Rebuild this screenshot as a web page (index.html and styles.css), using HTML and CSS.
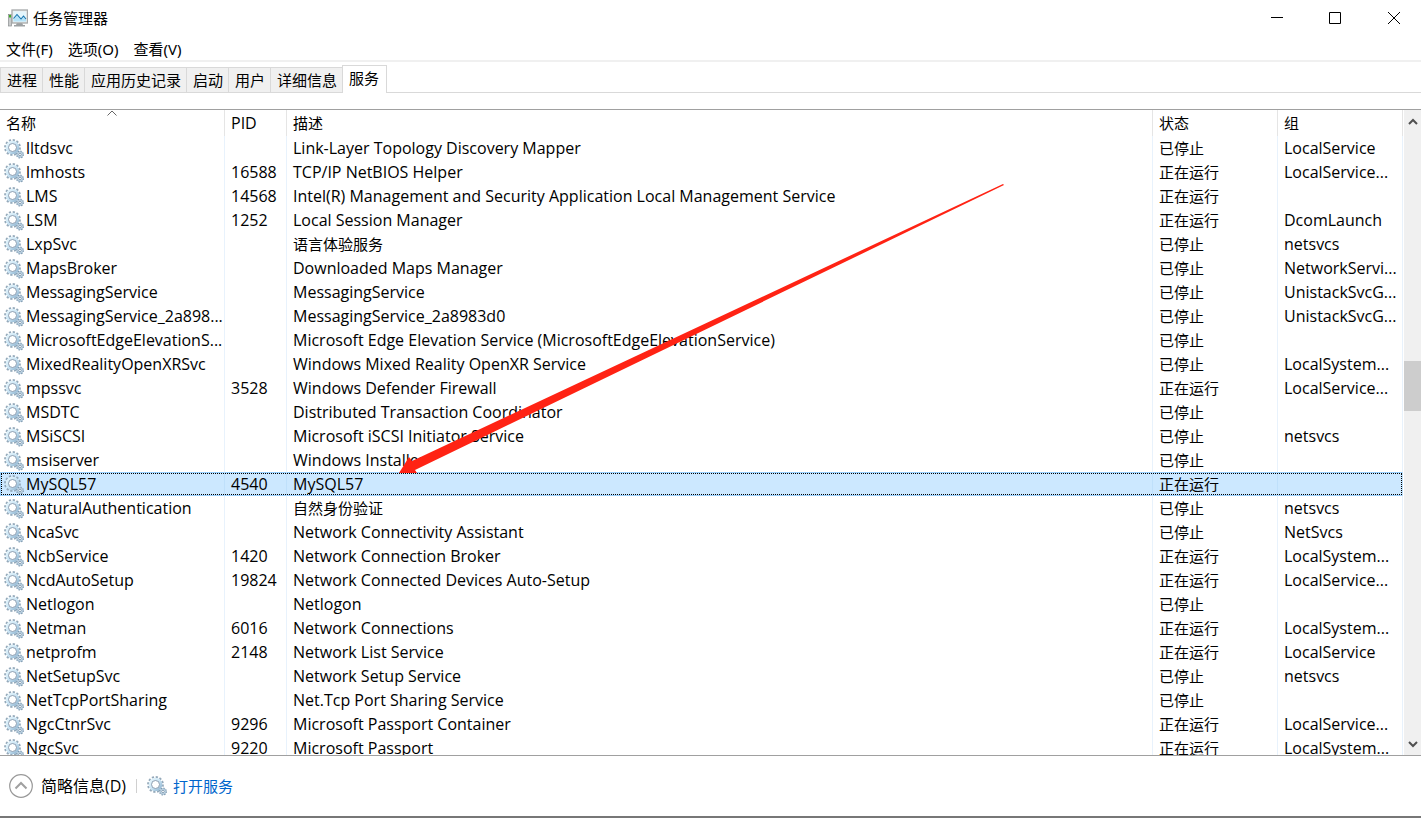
FILE: index.html
```html
<!DOCTYPE html>
<html lang="zh-CN">
<head>
<meta charset="utf-8">
<title>任务管理器</title>
<link rel="stylesheet" href="styles.css">
</head>
<body>
<svg class="defs" aria-hidden="true">
  <defs>
    <linearGradient id="steel" x1="0" y1="0" x2="1" y2="1"><stop offset="0" stop-color="#e6f5fc"/><stop offset="0.5" stop-color="#c9e4f4"/><stop offset="1" stop-color="#8fb4d0"/></linearGradient>
    <symbol id="gears" viewBox="0 0 20 20">
      <circle cx="8.500" cy="8.500" r="7.400" fill="none" stroke="#94a9ba" stroke-width="2" stroke-dasharray="2.200 1.674"/>
      <circle cx="8.500" cy="8.500" r="5.400" fill="none" stroke="url(#steel)" stroke-width="2.800"/>
      <circle cx="8.500" cy="8.500" r="4" fill="#fff" stroke="#7d92a8" stroke-width="0.900"/>
      <circle cx="16" cy="15.500" r="3.400" fill="#d3e3ee" stroke="#7895ac" stroke-width="1.200" stroke-dasharray="1.300 1.370"/>
      <circle cx="16" cy="15.500" r="2.800" fill="#cfe2ee" stroke="#8ba8bf" stroke-width="0.600"/>
      <circle cx="16" cy="15.500" r="1.300" fill="#fff" stroke="#607e99" stroke-width="0.700"/>
    </symbol>
  </defs>
</svg>
<div class="window">
  <header class="titlebar">
    <svg class="app-icon" viewBox="0 0 20 18" aria-hidden="true">
      <rect x="0.500" y="5.500" width="3" height="11.500" fill="#c9cbcc" stroke="#8b8f91" stroke-width="0.700"/>
      <rect x="1" y="6" width="2" height="2.500" fill="#3fae2a"/>
      <path d="M9 13.500h5l1 2.500h2v1.500H6V16h2z" fill="#9da1a3"/>
      <rect x="4" y="1" width="15.500" height="13" fill="#eceeee" stroke="#a6a9aa" stroke-width="1.300"/>
      <rect x="5.500" y="2.500" width="12.500" height="10" fill="#e4f6fd"/>
      <path d="M5.500 9.500l3.500-4 4 4 2.500-2.500 2.500 3v2.500H5.500z" fill="#b5e3f8"/>
      <path d="M5.500 9.500l3.500-4 4 4.500 2.500-3 2.500 3" fill="none" stroke="#1874ad" stroke-width="1.100"/>
    </svg>
    <h1 class="title">任务管理器</h1>
    <div class="window-buttons">
      <button type="button" aria-label="最小化"><svg viewBox="0 0 12 12"><path d="M0 5.500h12"/></svg></button>
      <button type="button" aria-label="最大化"><svg viewBox="0 0 12 12"><path d="M.5.5h11v11H.5z"/></svg></button>
      <button type="button" aria-label="关闭"><svg viewBox="0 0 12 12"><path d="M0 0l12 12M12 0L0 12"/></svg></button>
    </div>
  </header>
  <nav class="menu">
    <button type="button">文件(F)</button>
    <button type="button">选项(O)</button>
    <button type="button">查看(V)</button>
  </nav>
  <div class="tabs" role="tablist">
    <button type="button" role="tab">进程</button>
    <button type="button" role="tab">性能</button>
    <button type="button" role="tab">应用历史记录</button>
    <button type="button" role="tab">启动</button>
    <button type="button" role="tab">用户</button>
    <button type="button" role="tab">详细信息</button>
    <button type="button" role="tab" class="active" aria-selected="true">服务</button>
  </div>
  <main class="list">
    <div class="list-view">
      <table class="services">
        <colgroup><col class="col-name"><col class="col-pid"><col><col class="col-state"><col class="col-group"></colgroup>
        <thead>
          <tr><th>名称<svg class="sort" viewBox="0 0 10 6" aria-hidden="true"><path d="M.5 5.500L5 1l4.500 4.500"/></svg></th><th class="latin">PID</th><th>描述</th><th>状态</th><th>组</th></tr>
        </thead>
        <tbody>
          <tr><td><svg class="gear"><use href="#gears"/></svg>lltdsvc</td><td></td><td>Link-Layer Topology Discovery Mapper</td><td>已停止</td><td>LocalService</td></tr>
          <tr><td><svg class="gear"><use href="#gears"/></svg>lmhosts</td><td>16588</td><td>TCP/IP NetBIOS Helper</td><td>正在运行</td><td>LocalService...</td></tr>
          <tr><td><svg class="gear"><use href="#gears"/></svg>LMS</td><td>14568</td><td>Intel(R) Management and Security Application Local Management Service</td><td>正在运行</td><td></td></tr>
          <tr><td><svg class="gear"><use href="#gears"/></svg>LSM</td><td>1252</td><td>Local Session Manager</td><td>正在运行</td><td>DcomLaunch</td></tr>
          <tr><td><svg class="gear"><use href="#gears"/></svg>LxpSvc</td><td></td><td class="han">语言体验服务</td><td>已停止</td><td>netsvcs</td></tr>
          <tr><td><svg class="gear"><use href="#gears"/></svg>MapsBroker</td><td></td><td>Downloaded Maps Manager</td><td>已停止</td><td>NetworkServi...</td></tr>
          <tr><td><svg class="gear"><use href="#gears"/></svg>MessagingService</td><td></td><td>MessagingService</td><td>已停止</td><td>UnistackSvcG...</td></tr>
          <tr><td><svg class="gear"><use href="#gears"/></svg>MessagingService_2a898...</td><td></td><td>MessagingService_2a8983d0</td><td>已停止</td><td>UnistackSvcG...</td></tr>
          <tr><td><svg class="gear"><use href="#gears"/></svg>MicrosoftEdgeElevationS...</td><td></td><td>Microsoft Edge Elevation Service (MicrosoftEdgeElevationService)</td><td>已停止</td><td></td></tr>
          <tr><td><svg class="gear"><use href="#gears"/></svg>MixedRealityOpenXRSvc</td><td></td><td>Windows Mixed Reality OpenXR Service</td><td>已停止</td><td>LocalSystem...</td></tr>
          <tr><td><svg class="gear"><use href="#gears"/></svg>mpssvc</td><td>3528</td><td>Windows Defender Firewall</td><td>正在运行</td><td>LocalService...</td></tr>
          <tr><td><svg class="gear"><use href="#gears"/></svg>MSDTC</td><td></td><td>Distributed Transaction Coordinator</td><td>已停止</td><td></td></tr>
          <tr><td><svg class="gear"><use href="#gears"/></svg>MSiSCSI</td><td></td><td>Microsoft iSCSI Initiator Service</td><td>已停止</td><td>netsvcs</td></tr>
          <tr><td><svg class="gear"><use href="#gears"/></svg>msiserver</td><td></td><td>Windows Installer</td><td>已停止</td><td></td></tr>
          <tr class="selected"><td><svg class="gear"><use href="#gears"/></svg>MySQL57</td><td>4540</td><td>MySQL57</td><td>正在运行</td><td></td></tr>
          <tr><td><svg class="gear"><use href="#gears"/></svg>NaturalAuthentication</td><td></td><td class="han">自然身份验证</td><td>已停止</td><td>netsvcs</td></tr>
          <tr><td><svg class="gear"><use href="#gears"/></svg>NcaSvc</td><td></td><td>Network Connectivity Assistant</td><td>已停止</td><td>NetSvcs</td></tr>
          <tr><td><svg class="gear"><use href="#gears"/></svg>NcbService</td><td>1420</td><td>Network Connection Broker</td><td>正在运行</td><td>LocalSystem...</td></tr>
          <tr><td><svg class="gear"><use href="#gears"/></svg>NcdAutoSetup</td><td>19824</td><td>Network Connected Devices Auto-Setup</td><td>正在运行</td><td>LocalService...</td></tr>
          <tr><td><svg class="gear"><use href="#gears"/></svg>Netlogon</td><td></td><td>Netlogon</td><td>已停止</td><td></td></tr>
          <tr><td><svg class="gear"><use href="#gears"/></svg>Netman</td><td>6016</td><td>Network Connections</td><td>正在运行</td><td>LocalSystem...</td></tr>
          <tr><td><svg class="gear"><use href="#gears"/></svg>netprofm</td><td>2148</td><td>Network List Service</td><td>正在运行</td><td>LocalService</td></tr>
          <tr><td><svg class="gear"><use href="#gears"/></svg>NetSetupSvc</td><td></td><td>Network Setup Service</td><td>已停止</td><td>netsvcs</td></tr>
          <tr><td><svg class="gear"><use href="#gears"/></svg>NetTcpPortSharing</td><td></td><td>Net.Tcp Port Sharing Service</td><td>已停止</td><td></td></tr>
          <tr><td><svg class="gear"><use href="#gears"/></svg>NgcCtnrSvc</td><td>9296</td><td>Microsoft Passport Container</td><td>正在运行</td><td>LocalService...</td></tr>
          <tr><td><svg class="gear"><use href="#gears"/></svg>NgcSvc</td><td>9220</td><td>Microsoft Passport</td><td>正在运行</td><td>LocalSystem...</td></tr>
        </tbody>
      </table>
    </div>
    <div class="scrollbar">
      <button type="button" aria-label="向上滚动"><svg viewBox="0 0 10 7"><path d="M1 6l4-4 4 4"/></svg></button>
      <div class="track-above"></div>
      <div class="thumb"></div>
      <div class="track-below"></div>
      <button type="button" aria-label="向下滚动"><svg viewBox="0 0 10 7"><path d="M1 1l4 4 4-4"/></svg></button>
    </div>
  </main>
  <footer class="footer">
    <button type="button" class="fewer">
      <svg viewBox="0 0 24 24" aria-hidden="true"><circle cx="12" cy="12" r="11.300" fill="none" stroke="#999" stroke-width="1.200"/><path d="M6.500 14.500L12 9l5.500 5.500" fill="none" stroke="#a0a0a0" stroke-width="2"/></svg>简略信息(D)
    </button>
    <a class="open" href="#"><svg class="gear"><use href="#gears"/></svg>打开服务</a>
  </footer>
  <svg class="arrow" viewBox="0 0 606 290" aria-hidden="true"><path d="M1 289L11 273l3 4L605 0l1 1L17 286l2 3z" fill="#ff2314"/></svg>
</div>
</body>
</html>
```
FILE: styles.css
```css
* { box-sizing: border-box; }

body {
  margin: 0;
  background: #fff;
  color: #000;
  font: 15px/24px "Noto Sans", "Noto Sans CJK SC", sans-serif;
}

button {
  margin: 0;
  padding: 0;
  border: 0;
  background: none;
  color: inherit;
  font: inherit;
}

.defs { position: absolute; width: 0; height: 0; }

.window {
  position: relative;
  display: flex;
  flex-direction: column;
  height: 100vh;
  overflow: hidden;
}

.titlebar {
  display: flex;
  flex: none;
  align-items: center;
  height: 36px;
  padding-left: 8px;
}
.app-icon { width: 20px; height: 18px; margin-right: 5px; }
.title { margin: 0; font-size: 15px; font-weight: 400; }
.window-buttons { display: flex; margin-left: auto; }
.window-buttons button {
  display: grid;
  place-items: center;
  width: 58px;
  height: 36px;
}
.window-buttons button:last-child { width: 57px; padding-left: 3px; }
.window-buttons svg { width: 12px; height: 12px; }
.window-buttons path { fill: none; stroke: #000; }

.menu {
  display: flex;
  flex: none;
  gap: 15px;
  height: 26px;
  padding: 1px 0 0 6px;
  border-bottom: 2px solid #f0f0f0;
}
.menu button { height: 24px; }

.tabs {
  display: flex;
  flex: none;
  align-items: flex-end;
  height: 31px;
  border-bottom: 1px solid #d9d9d9;
}
.tabs button {
  height: 25px;
  padding: 0 5px 0 6px;
  border: solid #d9d9d9;
  border-width: 1px 0 0 1px;
  background: #f0f0f0;
}
.tabs .active {
  height: 28px;
  margin-bottom: -1px;
  padding: 0 7px 4px 6px;
  border-right-width: 1px;
  background: #fff;
}

.list {
  display: flex;
  flex: 1;
  min-height: 0;
  margin-top: 16px;
  border: solid #a0a0a0;
  border-width: 1px 0;
}
.list-view {
  flex: 1;
  min-width: 0;
  padding-right: 1px;
  overflow: hidden;
}

.services {
  width: 100%;
  border-spacing: 0;
  table-layout: fixed;
}
.col-name { width: 225px; }
.col-pid { width: 62px; }
.col-state, .col-group { width: 125px; }
.services th {
  position: relative;
  height: 26px;
  padding: 0 0 0 6px;
  border-right: 1px solid #e5e5e5;
  font-weight: 400;
  text-align: left;
}
.services td {
  height: 24px;
  padding: 0 0 0 6px;
  border-right: 1px solid #e8f2fc;
  overflow: hidden;
  line-height: 22px;
  white-space: nowrap;
}
.services td, .services .latin {
  font-family: "Open Sans", "Noto Sans CJK SC", sans-serif;
  font-size: 16px;
}
.services td:first-child { padding-left: 4px; }
.services td:nth-child(4), .services .han {
  font-family: "Noto Sans CJK SC", sans-serif;
  font-size: 15px;
}
.gear {
  width: 20px;
  height: 20px;
  margin-right: 2px;
}
.services .gear { margin-top: -4px; margin-bottom: -2px; vertical-align: middle; }
.services .selected {
  background: #cce8ff;
  box-shadow: inset 0 0 0 1px #99d1ff;
  outline: 1px dotted #000;
  outline-offset: -2px;
}
.selected td { border-right-color: #bfe0fb; }
.sort {
  position: absolute;
  top: 0;
  left: calc(50% - 5px);
  width: 10px;
  height: 6px;
  fill: none;
  stroke: #666;
}

.scrollbar {
  display: flex;
  flex-direction: column;
  width: 17px;
  background: #f0f0f0;
}
.scrollbar button {
  display: grid;
  flex: none;
  place-items: center;
  height: 22px;
}
.scrollbar svg { width: 10px; height: 7px; fill: none; stroke: #505050; stroke-width: 2; }
.track-above { flex: 229; }
.thumb { flex: 50; background: #cdcdcd; }
.track-below { flex: 322; }

.footer {
  display: flex;
  flex: none;
  align-items: center;
  height: 62px;
  padding-left: 9px;
  border-bottom: 2px solid #777;
}
.fewer {
  display: flex;
  align-items: center;
  gap: 8px;
  font-family: "Open Sans", "Noto Sans CJK SC", sans-serif;
  font-size: 16px;
}
.fewer svg { width: 24px; height: 24px; }
.open {
  display: flex;
  align-items: center;
  gap: 4px;
  margin-left: 10px;
  color: #0066cc;
  text-decoration: none;
}
.open::before {
  width: 1px;
  height: 14px;
  margin-right: 6px;
  background: #d0d0d0;
  content: "";
}

.arrow {
  position: absolute;
  top: 184px;
  left: 398px;
  width: 606px;
  height: 290px;
  pointer-events: none;
}
```
